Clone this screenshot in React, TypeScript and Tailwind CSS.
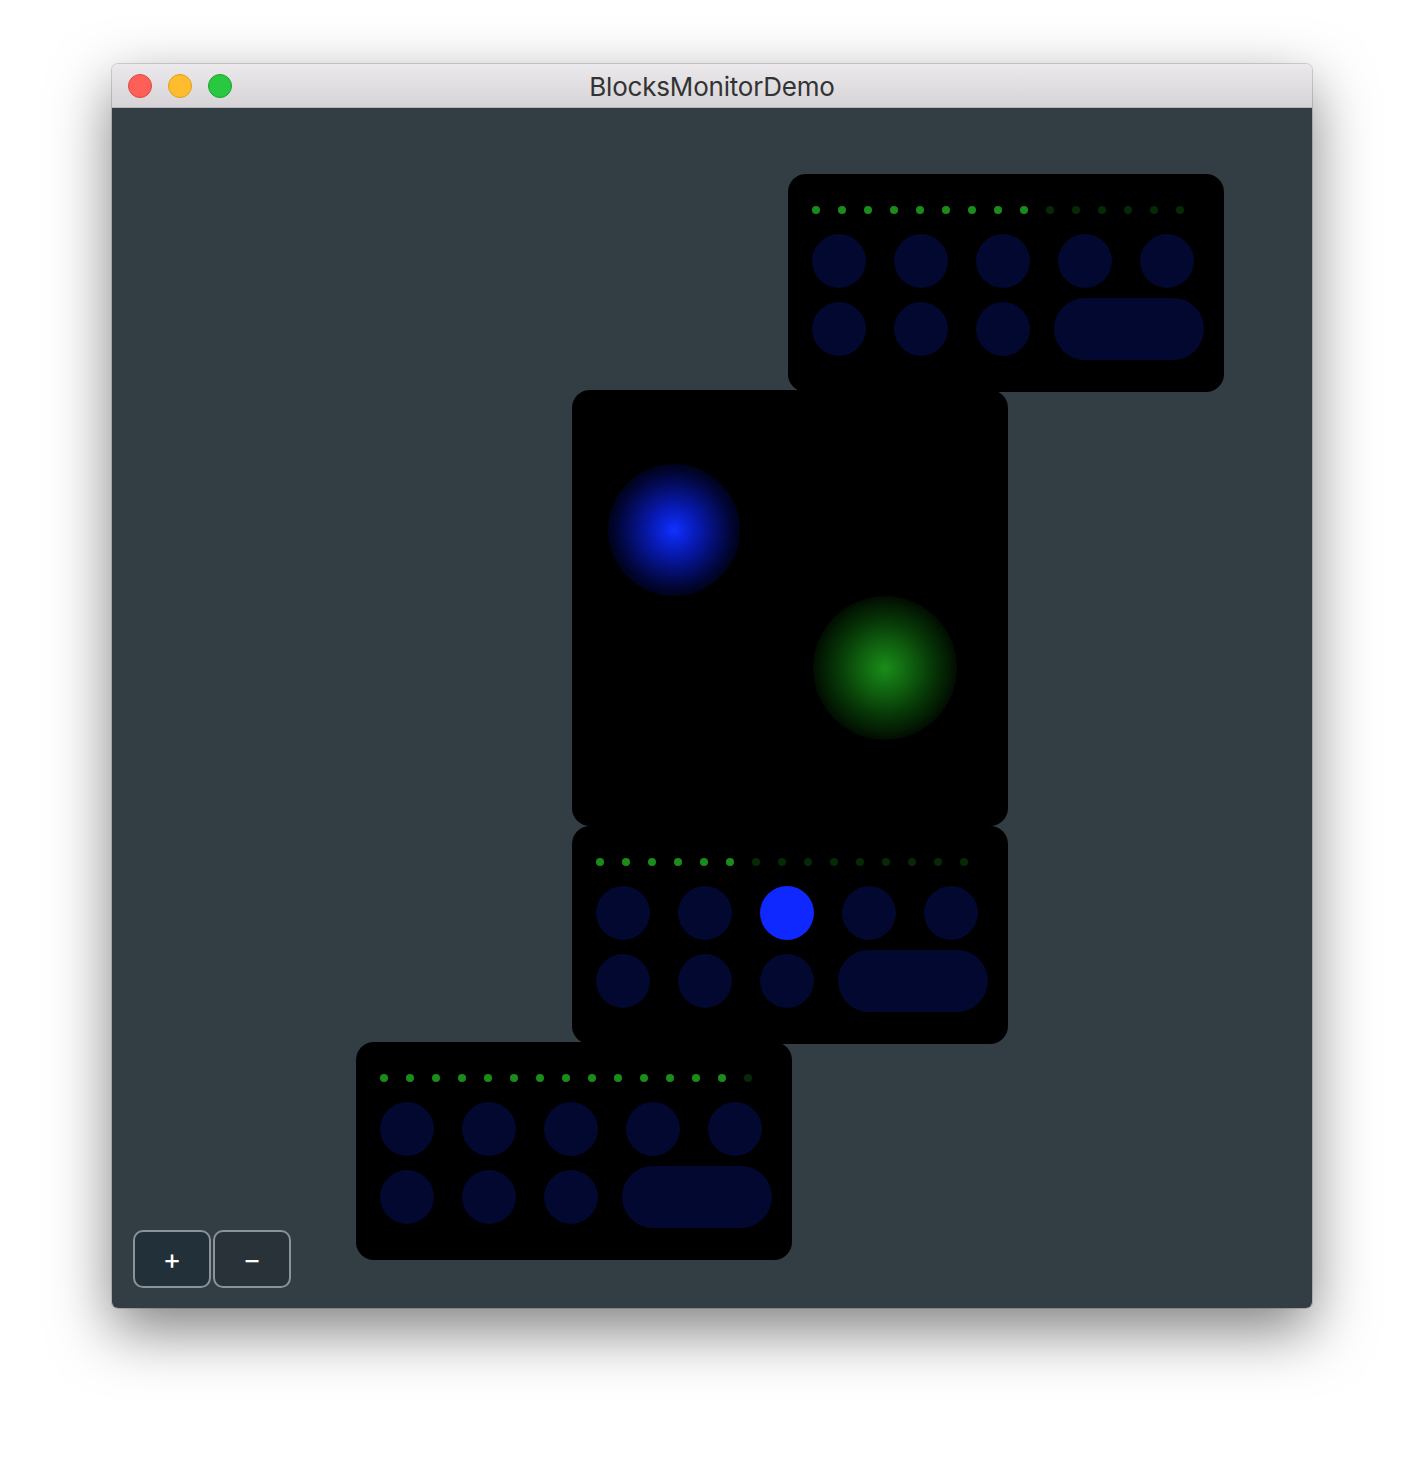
import React from "react";

// Layout of the demo canvas: each block sits at its own spot on the surface
type ControlBlock = { left: string; top: string; lit: number; active?: number };

const DOTS = Array.from({ length: 15 }, (_, i) => i);

function Dots({ lit }: { lit: number }) {
  return (
    <div className="flex gap-[18px] h-2">
      {DOTS.map((i) => (
        <div
          key={i}
          className={i < lit ? "w-2 h-2 rounded-full bg-[#1a8c1a]" : "w-2 h-2 rounded-full bg-[#062806]"}
        />
      ))}
    </div>
  );
}

function Pad({ on }: { on?: boolean }) {
  return (
    <div className={on ? "w-[54px] h-[54px] rounded-full bg-[#0f28ff]" : "w-[54px] h-[54px] rounded-full bg-[#020830]"} />
  );
}

function ControlBlockView({ lit, active }: { lit: number; active?: number }) {
  return (
    <div className="w-[436px] h-[218px] rounded-[18px] bg-black pl-[24px] pt-[32px]">
      <Dots lit={lit} />
      <div className="mt-[20px] flex gap-[28px]">
        {[0, 1, 2, 3, 4].map((i) => (
          <Pad key={i} on={active === i} />
        ))}
      </div>
      <div className="mt-[10px] flex items-center h-[62px]">
        <div className="flex gap-[28px]">
          <Pad />
          <Pad />
          <Pad />
        </div>
        <div className="ml-[24px] w-[150px] h-[62px] rounded-full bg-[#020830]" />
      </div>
    </div>
  );
}

function Lightpad() {
  return (
    <div className="relative w-[436px] h-[436px] rounded-[18px] bg-black">
      {/* touch points */}
      <div className="absolute left-[36px] top-[74px] w-[132px] h-[132px] rounded-full bg-[radial-gradient(circle_closest-side,#1233ff_0%,#0c26e0_15%,#0718a8_40%,#040e6a_65%,#010532_88%,#00031a_100%)]" />
      <div className="absolute left-[241px] top-[206px] w-[144px] h-[144px] rounded-full bg-[radial-gradient(circle_closest-side,#1a8c1a_0%,#157a15_15%,#0e5a0e_40%,#073807_65%,#031c03_88%,#010c01_100%)]" />
    </div>
  );
}

const blocks: ControlBlock[] = [
  { left: "left-[676px]", top: "top-[66px]", lit: 9 },
  { left: "left-[460px]", top: "top-[718px]", lit: 6, active: 2 },
  { left: "left-[244px]", top: "top-[934px]", lit: 14 },
];

export default function App() {
  return (
    <div className="w-[1424px] h-[1468px] bg-white pl-[112px] pt-[64px]" style={{ fontFamily: "Inter, 'Liberation Sans', sans-serif" }}>
      <div className="w-[1200px] rounded-[6px] overflow-hidden shadow-[0_22px_60px_rgba(0,0,0,0.5)] ring-1 ring-black/15">
        {/* title bar */}
        <div className="relative h-[44px] flex items-center justify-center bg-gradient-to-b from-[#ebe9eb] to-[#d6d4d6] border-b border-[#b9b7b9]">
          <div className="absolute left-[16px] top-[10px] flex gap-[16px]">
            <div className="w-6 h-6 rounded-full bg-[#fe5f57] border border-[#e2463f]" />
            <div className="w-6 h-6 rounded-full bg-[#febc2e] border border-[#e1a116]" />
            <div className="w-6 h-6 rounded-full bg-[#29c840] border border-[#13a826]" />
          </div>
          <span className="text-[26px] text-[#333333] tracking-[-0.2px] pt-[2px]">BlocksMonitorDemo</span>
        </div>

        {/* canvas */}
        <div className="relative h-[1200px] bg-[#333d44]">
          <div className="absolute left-[460px] top-[282px]">
            <Lightpad />
          </div>
          {blocks.map((b, i) => (
            <div key={i} className={"absolute " + b.left + " " + b.top}>
              <ControlBlockView lit={b.lit} active={b.active} />
            </div>
          ))}

          {/* zoom buttons */}
          <div className="absolute left-[21px] bottom-[20px] flex gap-[2px]">
            <button className="w-[78px] h-[58px] rounded-[10px] border-2 border-[#8a9397] bg-[#22303a] text-white text-[28px] leading-none flex items-center justify-center">
              +
            </button>
            <button className="w-[78px] h-[58px] rounded-[10px] border-2 border-[#8a9397] bg-[#293238] text-white text-[28px] leading-none flex items-center justify-center">
              −
            </button>
          </div>
        </div>
      </div>
    </div>
  );
}
